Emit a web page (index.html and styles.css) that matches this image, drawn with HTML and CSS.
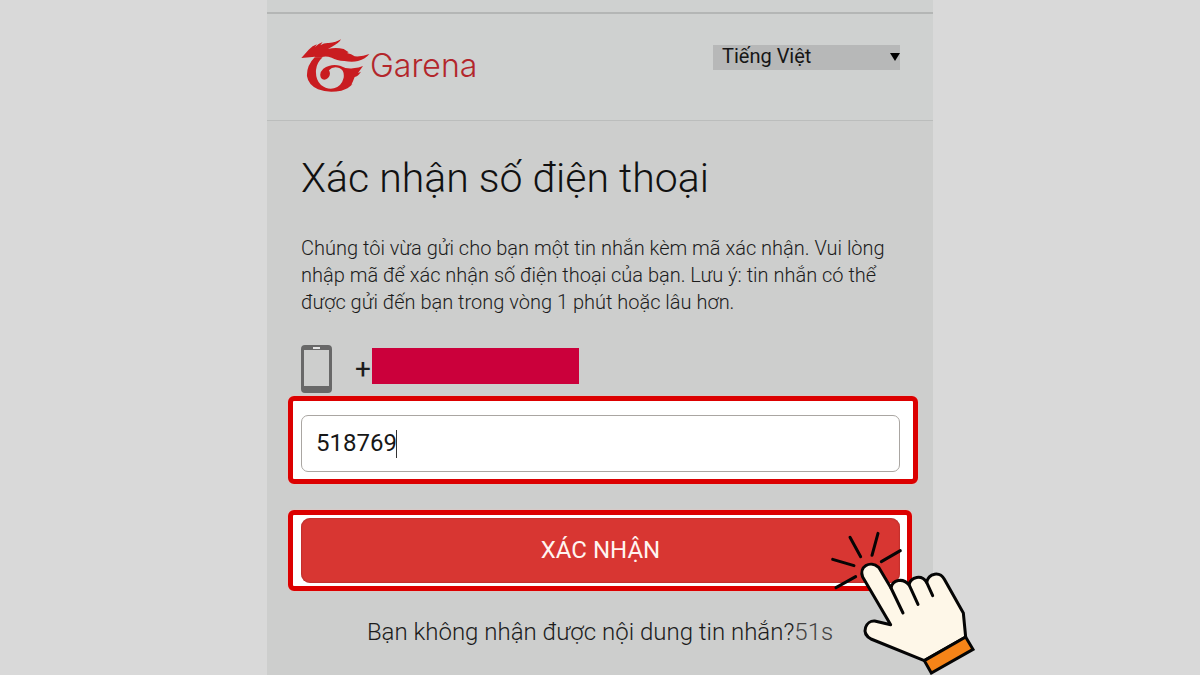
FILE: index.html
```html
<!DOCTYPE html>
<html lang="vi">
<head>
<meta charset="utf-8">
<meta name="viewport" content="width=device-width, initial-scale=1">
<title>Xác nhận số điện thoại</title>
<link rel="stylesheet" href="styles.css">
</head>
<body>
<div class="page">
  <header class="header">
    <div class="brand">
      <svg class="brand-mark" viewBox="36 22 207 165" aria-hidden="true">
        <path d="M37 82 L59 57 Q70 45 84 41 L77 50 Q89 38 101 34 L94 44 Q106 36 119 37 Q142 35 156 26 Q150 38 129 48 L117 55 Q140 49 164 55 L179 65 L174 67 Q187 69 197 77 Q219 79 241 70 Q230 85 207 91 Q190 96 166 91 Q143 90 128 81 Q111 75 99 79 Q89 83 77 78 L62 80 Z"/>
        <path d="M77 80 L101 80 Q83 96 81 118 Q79 148 96 163 Q113 177 135 173 Q158 166 164 141 Q167 119 151 112 Q131 106 120 119 Q127 132 117 142 Q105 152 96 142 Q89 127 103 114 Q126 98 153 105 Q173 116 192 113 Q210 112 222 106 L207 127 L216 123 Q207 137 197 139 Q193 150 187 162 L191 160 Q177 175 157 180 Q117 188 87 176 Q58 163 54 137 Q52 106 77 80 Z"/>
      </svg>
      <span class="brand-name">Garena</span>
    </div>
    <div class="language">
      <select class="language-select" aria-label="Ngôn ngữ">
        <option>Tiếng Việt</option>
      </select>
      <svg class="language-arrow" viewBox="0 0 10 8" aria-hidden="true"><path d="M0 0H10L5 8Z"/></svg>
    </div>
  </header>
  <main class="main">
    <h1 class="title">Xác nhận số điện thoại</h1>
    <p class="description">Chúng tôi vừa gửi cho bạn một tin nhắn kèm mã xác nhận. Vui lòng nhập mã để xác nhận số điện thoại của bạn. Lưu ý: tin nhắn có thể được gửi đến bạn trong vòng 1 phút hoặc lâu hơn.</p>
    <div class="phone">
      <svg class="phone-icon" viewBox="0 0 31 48" aria-hidden="true">
        <path fill="#686868" fill-rule="evenodd" d="M4 0H27Q31 0 31 4V44Q31 48 27 48H4Q0 48 0 44V4Q0 0 4 0ZM3 5V41H28V5Z"/>
        <path fill="#e4e4e4" d="M12 2H19V4H12Z"/>
      </svg>
      <span class="phone-prefix">+</span>
      <span class="phone-mask"></span>
    </div>
    <form class="form">
      <div class="frame frame-code">
        <input class="code" type="text" inputmode="numeric" value="518769" aria-label="Mã xác nhận">
        <span class="caret"></span>
      </div>
      <div class="frame frame-submit">
        <button class="submit" type="button">XÁC NHẬN</button>
        <svg class="pointer" viewBox="0 0 510 450" aria-hidden="true">
          <g stroke="#050505" stroke-width="9" stroke-linejoin="round" stroke-linecap="round">
            <path fill="none" d="M90 37L122 95M174 25L156 91M241 77L184 110M38 103L102 122M107 155L48 188"/>
            <path fill="#fef7e8" d="M212 299L128 156C116 126 150 104 176 127L213 189C218 164 248 158 267 179C273 155 305 148 320 172C326 143 360 139 373 163L430 264L437 336L313 407L153 342C120 323 139 286 164 288Z"/>
            <path fill="none" d="M213 189L249 264M267 179L294 238M320 172L338 212"/>
            <path fill="#f68418" stroke-linejoin="miter" d="M313 407L437 336L459 373L334 444Z"/>
          </g>
        </svg>
      </div>
    </form>
    <p class="resend">Bạn không nhận được nội dung tin nhắn?<span class="timer">51s</span></p>
  </main>
</div>
</body>
</html>
```
FILE: styles.css
```css
* {
  box-sizing: border-box;
}

body {
  margin: 0;
  background: #d9d9d9;
  color: #1c1c1c;
  font-family: Roboto, "Noto Sans", sans-serif;
}

.page {
  max-width: 666px;
  min-height: 100vh;
  margin: 0 auto;
  border-top: 12px solid #cfd1d0;
  background: #cdcecd;
}

.header {
  display: flex;
  align-items: flex-start;
  justify-content: space-between;
  padding: 24px 33px 27px 34px;
  border-top: 2px solid #b4b6b5;
  border-bottom: 1px solid #bbbdbc;
  background: #cfd1d0;
}

.brand {
  display: flex;
  align-items: center;
}

.brand-mark {
  width: 69px;
  height: 55px;
  fill: #c91c20;
}

.brand-name {
  color: #b3262b;
  font: 300 32px/52px Inter, "Liberation Sans", sans-serif;
}

.language {
  position: relative;
  width: 187px;
  margin-top: 7px;
}

.language-select {
  display: block;
  width: 100%;
  height: 25px;
  padding: 0 9px 2px;
  border: 0;
  border-radius: 0;
  appearance: none;
  background: #b7b8b8;
  color: #161616;
  font: 400 20px/23px Roboto, sans-serif;
}

.language-arrow {
  position: absolute;
  top: 8px;
  right: 0;
  width: 10px;
  height: 8px;
  pointer-events: none;
}

.main {
  padding: 32px 21px 24px;
}

.title {
  margin: 0 13px;
  color: #111;
  font-size: 41px;
  font-weight: 300;
  line-height: 50px;
}

.description {
  margin: 32px 13px 0;
  font-size: 20px;
  font-weight: 300;
  line-height: 27px;
}

.phone {
  display: flex;
  align-items: center;
  margin: 29px 13px 0;
}

.phone-icon {
  width: 31px;
  height: 48px;
}

.phone-prefix {
  width: 17px;
  margin-left: 23px;
  font-size: 28px;
  line-height: 36px;
}

.phone-mask {
  width: 207px;
  height: 36px;
  margin-bottom: 6px;
  background: #cb003b;
}

.frame {
  position: relative;
  border: 5px solid #dc0000;
  border-radius: 6px;
  background: #fff;
  box-shadow: 0 0 2px #f0c0bb;
}

.frame-code {
  margin: 3px -6px 0 0;
  padding: 14px 13px 7px 8px;
}

.code {
  display: block;
  width: 100%;
  height: 57px;
  padding: 0 14px 2px;
  border: 1px solid #aaa6a2;
  border-radius: 7px;
  background: #fff;
  color: #171717;
  font: 400 24px/28px Roboto, sans-serif;
}

.caret {
  position: absolute;
  top: 29px;
  left: 103px;
  width: 1px;
  height: 28px;
  background: #333;
}

.frame-submit {
  margin-top: 26px;
  padding: 3px 7px 3px 8px;
}

.submit {
  display: block;
  width: 100%;
  height: 65px;
  padding: 0 0 2px;
  border: 0;
  border-radius: 9px;
  background: #d83632;
  box-shadow: inset 0 0 2px #8e2522;
  color: #fff4f0;
  font: 400 24px/28px Roboto, sans-serif;
}

.pointer {
  position: absolute;
  top: 10px;
  right: -83px;
  width: 170px;
  height: 150px;
  pointer-events: none;
}

.resend {
  margin: 26px 0 0;
  font-size: 24px;
  font-weight: 300;
  line-height: 30px;
  text-align: center;
}

.timer {
  color: #444;
}
```
